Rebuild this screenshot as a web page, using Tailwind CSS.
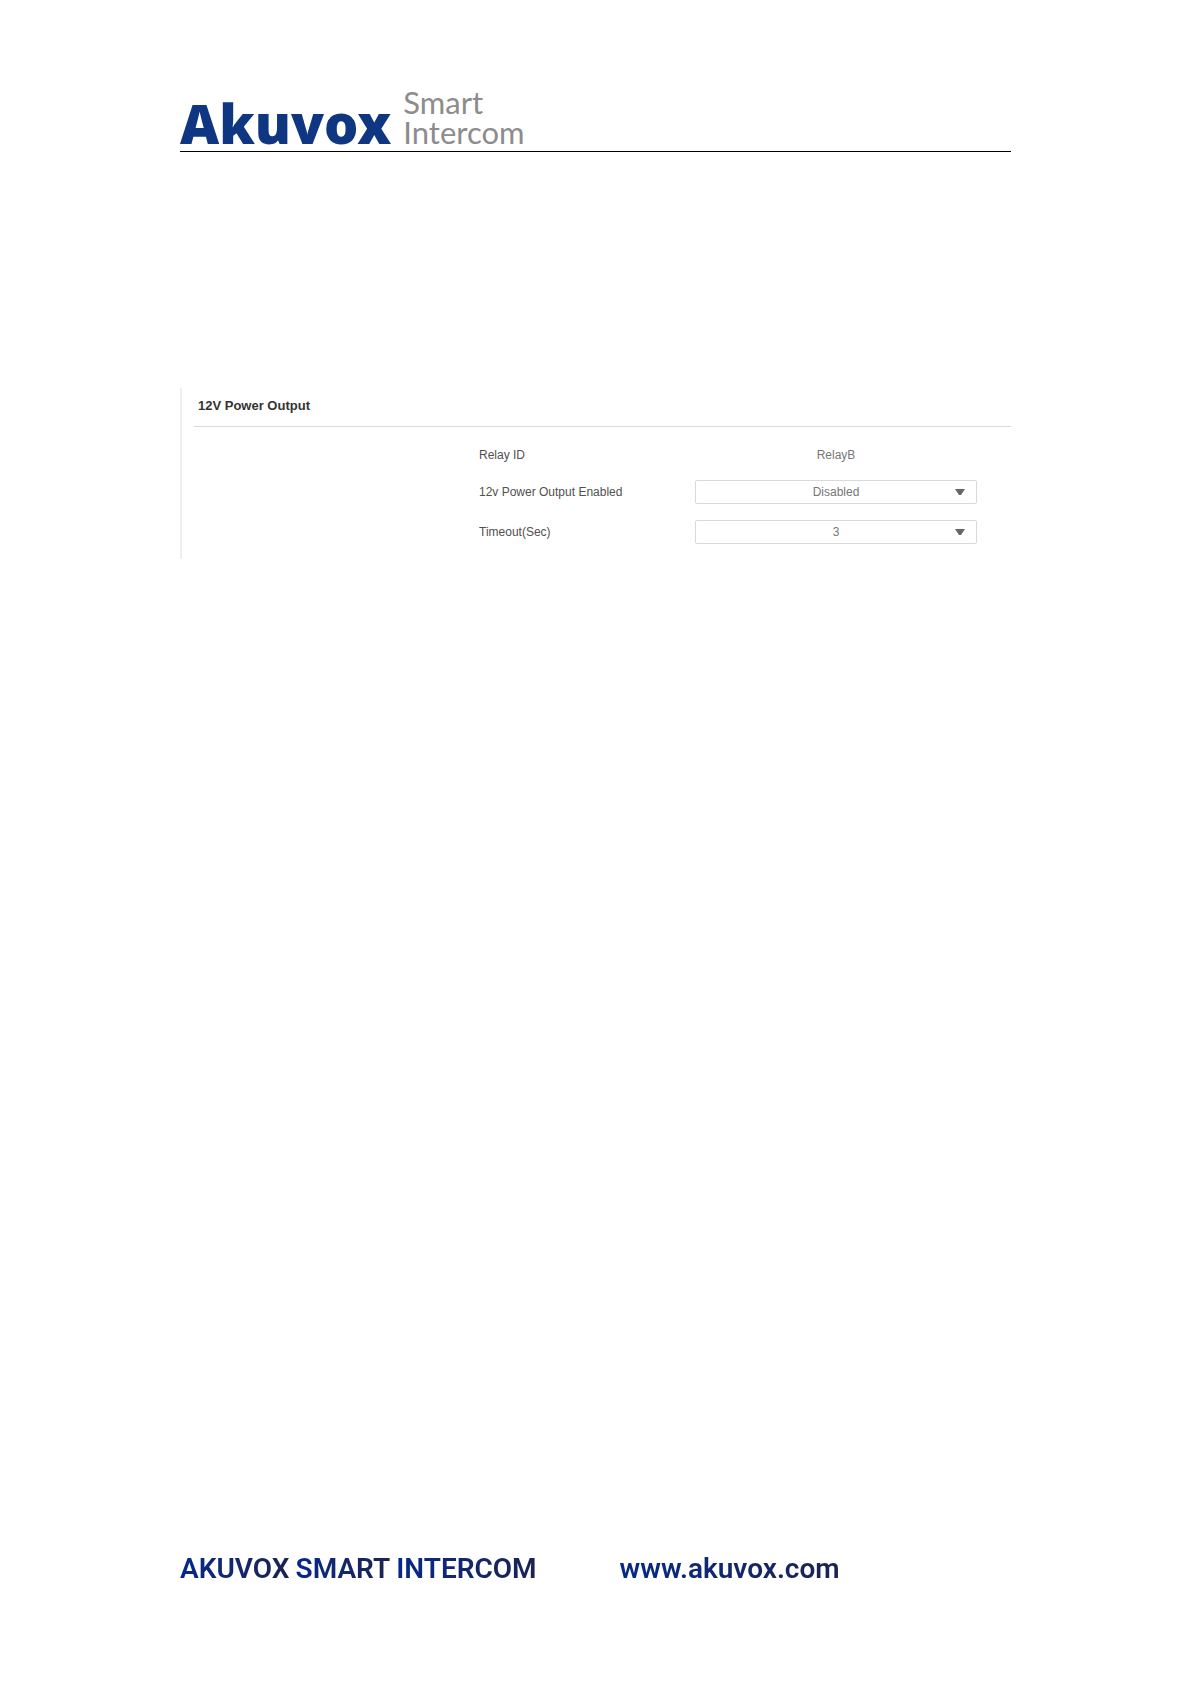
<!DOCTYPE html>
<html lang="en">
  <head>
    <meta charset="UTF-8" />
    <meta name="viewport" content="width=device-width, initial-scale=1.0" />
    <title>Akuvox Smart Intercom</title>
    <script src="https://cdn.jsdelivr.net/npm/@tailwindcss/browser@4"></script>
  </head>
  <body class="bg-white">
    <div class="min-h-screen flex flex-col px-[180px] pt-20 pb-[95px]">
      <!-- Header -->
      <header class="flex items-end gap-3 h-18 border-b border-black">
        <span class="font-['Noto_Sans',sans-serif] font-black text-[54px] leading-[56px] text-[#0f3680]">Akuvox</span>
        <span class="flex flex-col pb-1 font-[Lato,sans-serif] text-[31px] leading-[30px] text-[#8c8c8c]">
          <span>Smart</span>
          <span>Intercom</span>
        </span>
      </header>

      <!-- 12V Power Output -->
      <main class="mt-59 font-['Liberation_Sans',Arial,sans-serif]">
        <section class="border-l-2 border-[#eeeeee] pb-1">
          <h2 class="ml-3 pl-1 h-[39px] leading-[35px] border-b border-[#d9d9d9] text-[13px] font-bold text-[#333333]">12V Power Output</h2>
          <div class="pt-2 text-xs text-[#505050]">
            <div class="grid grid-cols-[297fr_216fr_282fr_34fr] items-center h-10">
              <span class="col-start-2">Relay ID</span>
              <span class="text-center text-[#777777]">RelayB</span>
            </div>
            <div class="grid grid-cols-[297fr_216fr_282fr_34fr] items-center h-[34px]">
              <label for="power-output" class="col-start-2">12v Power Output Enabled</label>
              <div class="relative">
                <select id="power-output" class="block w-full h-6 appearance-none border border-[#d9d9d9] rounded-xs bg-white text-center [text-align-last:center] text-[#777777]">
                  <option>Disabled</option>
                  <option>Enabled</option>
                </select>
                <svg class="absolute right-3 top-2 w-[10px] h-2 pointer-events-none" viewBox="0 0 10 8" fill="#666666"><path d="M0 1h10L6 7h-2z" /></svg>
              </div>
            </div>
            <div class="grid grid-cols-[297fr_216fr_282fr_34fr] items-center h-[46px]">
              <label for="timeout" class="col-start-2">Timeout(Sec)</label>
              <div class="relative">
                <select id="timeout" class="block w-full h-6 appearance-none border border-[#d9d9d9] rounded-xs bg-white text-center [text-align-last:center] text-[#777777]">
                  <option>3</option>
                  <option>5</option>
                  <option>10</option>
                </select>
                <svg class="absolute right-3 top-2 w-[10px] h-2 pointer-events-none" viewBox="0 0 10 8" fill="#666666"><path d="M0 1h10L6 7h-2z" /></svg>
              </div>
            </div>
          </div>
        </section>
      </main>

      <!-- Footer -->
      <footer class="mt-auto flex gap-[83px] font-[Roboto,sans-serif] font-semibold text-[28px] leading-10">
        <p class="flex gap-1.5 text-transparent">
          <span class="bg-linear-to-r from-[#04288a] to-[#1b2350] bg-clip-text">AKUVOX</span>
          <span class="bg-linear-to-r from-[#04288a] to-[#1b2350] bg-clip-text">SMART</span>
          <span class="bg-linear-to-r from-[#04288a] to-[#1b2350] bg-clip-text">INTERCOM</span>
        </p>
        <a href="https://www.akuvox.com" class="bg-linear-to-r from-[#04288a] to-[#1b2350] bg-clip-text text-transparent">www.akuvox.com</a>
      </footer>
    </div>
  </body>
</html>
